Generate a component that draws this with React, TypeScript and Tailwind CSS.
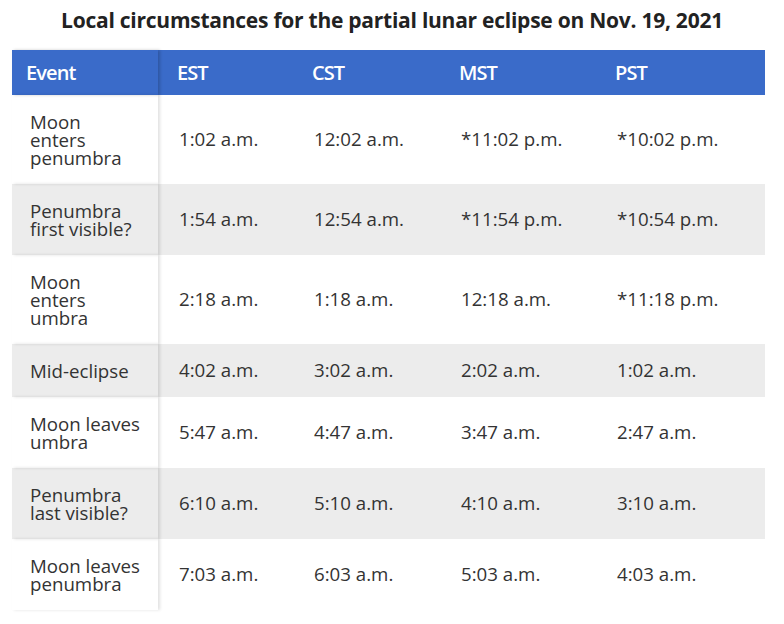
import React from 'react';

const rows: { event: string[]; times: string[] }[] = [
    { event: ['Moon', 'enters', 'penumbra'], times: ['1:02 a.m.', '12:02 a.m.', '*11:02 p.m.', '*10:02 p.m.'] },
    { event: ['Penumbra', 'first visible?'], times: ['1:54 a.m.', '12:54 a.m.', '*11:54 p.m.', '*10:54 p.m.'] },
    { event: ['Moon', 'enters', 'umbra'], times: ['2:18 a.m.', '1:18 a.m.', '12:18 a.m.', '*11:18 p.m.'] },
    { event: ['Mid-eclipse'], times: ['4:02 a.m.', '3:02 a.m.', '2:02 a.m.', '1:02 a.m.'] },
    { event: ['Moon leaves', 'umbra'], times: ['5:47 a.m.', '4:47 a.m.', '3:47 a.m.', '2:47 a.m.'] },
    { event: ['Penumbra', 'last visible?'], times: ['6:10 a.m.', '5:10 a.m.', '4:10 a.m.', '3:10 a.m.'] },
    { event: ['Moon leaves', 'penumbra'], times: ['7:03 a.m.', '6:03 a.m.', '5:03 a.m.', '4:03 a.m.'] },
];

const zones = ['EST', 'CST', 'MST', 'PST'];
const cols = 'grid grid-cols-[146px_135px_147px_156px_169px]';

export default function App() {
    return (
        <div className="w-[784px] h-[624px] bg-white font-['Open_Sans',sans-serif] text-[#333]">
            {/* Title */}
            <h1 className="pt-[5px] h-[50px] text-center text-[21px] font-bold tracking-[-0.25px] text-[#222]">
                Local circumstances for the partial lunar eclipse on Nov. 19, 2021
            </h1>

            <div className="ml-[12px] w-[753px]">
                {/* Header */}
                <div className={`${cols} h-[45px] bg-[#3a6bc9] text-white text-[20px] font-semibold tracking-[-0.9px]`}>
                    <div className="flex items-center pl-[14px] shadow-[2px_0_3px_rgba(0,0,0,0.2)] relative z-10">Event</div>
                    {zones.map((z) => (
                        <div key={z} className="flex items-center pl-[19px]">{z}</div>
                    ))}
                </div>

                {/* Rows */}
                {rows.map((r, i) => (
                    <div key={i} className={`${cols} ${i % 2 === 1 ? 'bg-[#ececec]' : 'bg-white'} text-[18.7px]`}>
                        <div className="py-[17.5px] pl-[18px] pr-[4px] leading-[18px] shadow-[2px_0_3px_rgba(0,0,0,0.12)] relative z-10">
                            {r.event.map((l) => (
                                <div key={l}>{l}</div>
                            ))}
                        </div>
                        {r.times.map((t, j) => (
                            <div key={j} className="flex items-center pl-[21px]">{t}</div>
                        ))}
                    </div>
                ))}
            </div>
        </div>
    );
}
